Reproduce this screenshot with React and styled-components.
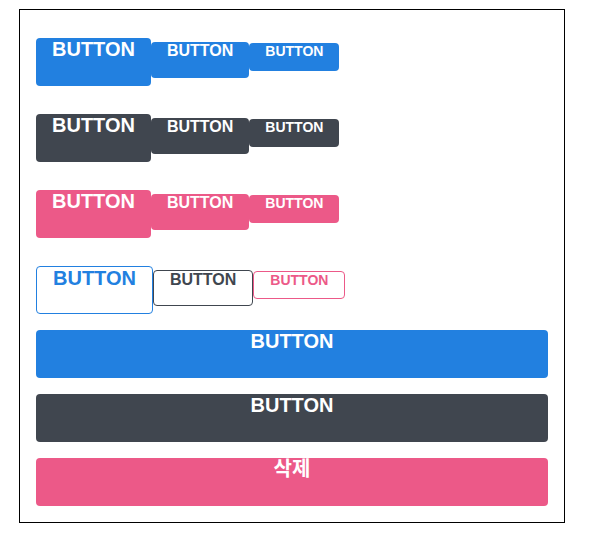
import React from "react";
import styled, { createGlobalStyle, css } from "styled-components";

const GlobalStyle = createGlobalStyle`
  html, body { margin: 0; padding: 0; background: #ffffff; }
  body { font-family: "Liberation Sans", "Noto Sans CJK KR", Arial, sans-serif; }
`;

const palette = {
  blue: "#2280e0",
  gray: "#40464f",
  pink: "#ec5988",
};

const sizes = {
  large: { height: "48px", font: "20px" },
  medium: { height: "36px", font: "16px" },
  small: { height: "28px", font: "14px" },
};

const Page = styled.div`
  padding: 9px 0 0 19px;
`;

const Box = styled.div`
  width: 512px;
  padding: 16px;
  border: 1px solid #000000;
  box-sizing: content-box;
`;

const Row = styled.div`
  display: flex;
  align-items: baseline;
  margin-top: ${(p) => p.$top}px;
`;

const Stack = styled.div`
  display: flex;
  flex-direction: column;
  gap: 16px;
  margin-top: 16px;
`;

const Button = styled.button`
  display: inline-flex;
  box-sizing: border-box;
  margin: 0;
  padding: 0 16px;
  border: none;
  border-radius: 4px;
  outline: none;
  cursor: pointer;
  font-family: "Liberation Sans", "Noto Sans CJK KR", Arial, sans-serif;
  font-weight: bold;
  line-height: 1.15;
  color: #ffffff;
  background: ${(p) => palette[p.$color]};
  height: ${(p) => sizes[p.$size].height};
  font-size: ${(p) => sizes[p.$size].font};

  ${(p) =>
    p.$outline &&
    css`
      color: ${palette[p.$color]};
      background: transparent;
      border: 1px solid ${palette[p.$color]};
    `}

  ${(p) =>
    p.$full &&
    css`
      width: 100%;
      justify-content: center;
    `}
`;

const rows = [
  { color: "blue", top: 12 },
  { color: "gray", top: 28 },
  { color: "pink", top: 28 },
];

export default function App() {
  return (
    <>
      <GlobalStyle />
      <Page>
        <Box>
          {rows.map((r) => (
            <Row key={r.color} $top={r.top}>
              <Button $color={r.color} $size="large">BUTTON</Button>
              <Button $color={r.color} $size="medium">BUTTON</Button>
              <Button $color={r.color} $size="small">BUTTON</Button>
            </Row>
          ))}
          <Row $top={28}>
            <Button $outline $color="blue" $size="large">BUTTON</Button>
            <Button $outline $color="gray" $size="medium">BUTTON</Button>
            <Button $outline $color="pink" $size="small">BUTTON</Button>
          </Row>
          <Stack>
            <Button $full $color="blue" $size="large">BUTTON</Button>
            <Button $full $color="gray" $size="large">BUTTON</Button>
            <Button $full $color="pink" $size="large">삭제</Button>
          </Stack>
        </Box>
      </Page>
    </>
  );
}
